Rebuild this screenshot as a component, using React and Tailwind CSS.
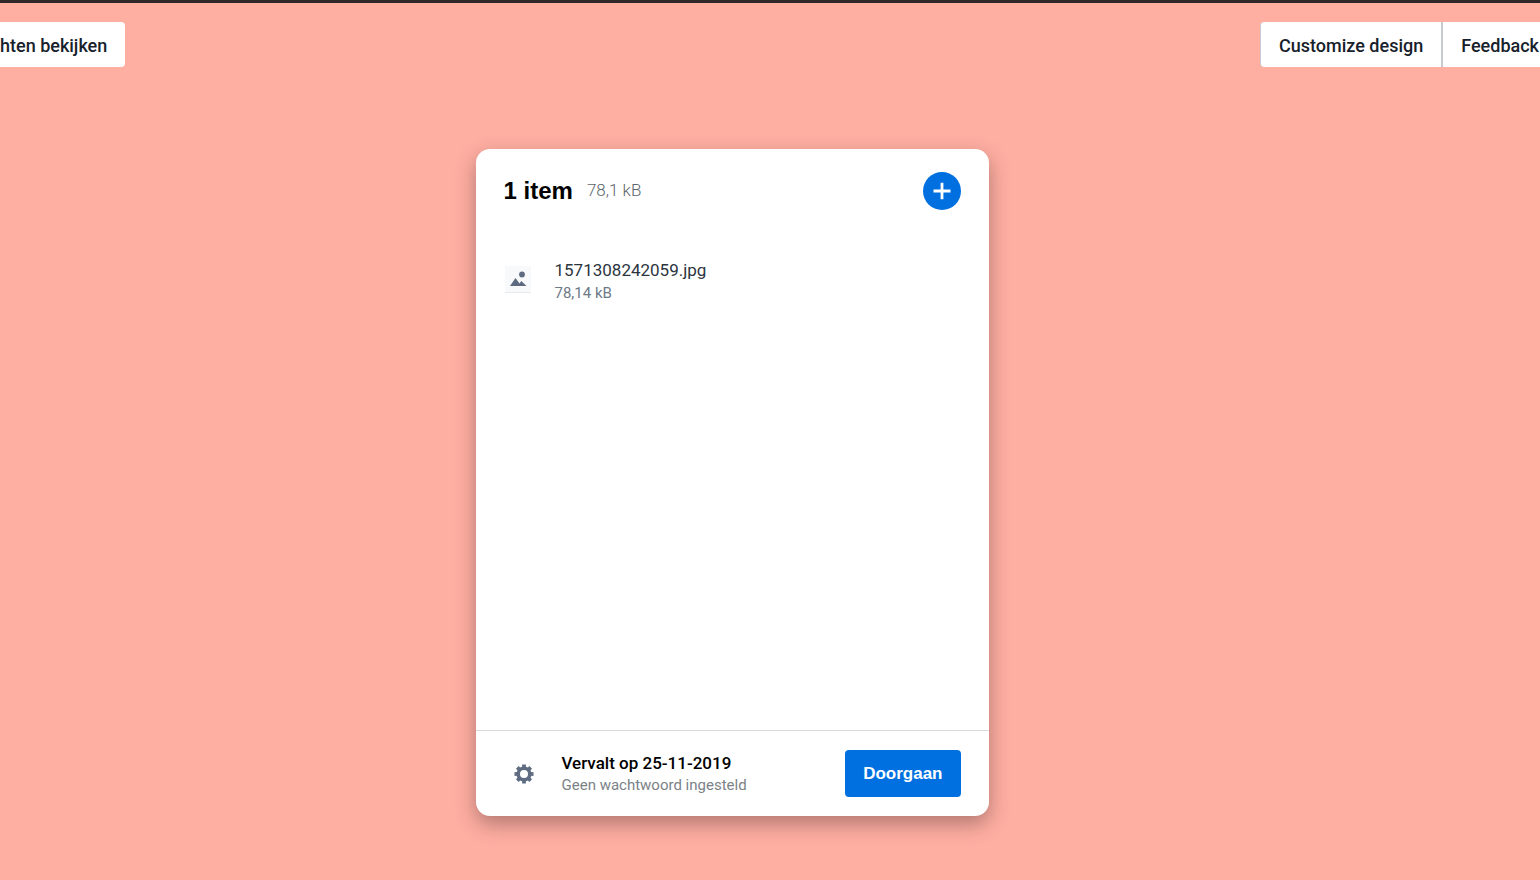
import React, { useState } from 'react';

const files = [{ id: 1, name: '1571308242059.jpg', size: '78,14 kB' }];

const PlusIcon = () => (
  <svg width="18" height="18" viewBox="0 0 18 18" fill="none" stroke="white" strokeWidth="2.8" aria-hidden="true">
    <path d="M9 .8v16.4M.5 9h17" />
  </svg>
);

const ImageIcon = () => (
  <svg width="26" height="27" viewBox="0 0 26 27" aria-hidden="true">
    <rect width="26" height="26" fill="#f7f9fb" />
    <path d="M0 26.5h26" stroke="#e6e9ed" />
    <path d="M5 20l5.5-8 4 5.4 1.8-2.4 5.2 5z" fill="#5c6b80" />
    <circle cx="17" cy="8.5" r="2.9" fill="#5c6b80" />
  </svg>
);

const GearIcon = () => (
  <svg width="20" height="20" viewBox="0 0 20 20" fill="none" stroke="#5f6c82" aria-hidden="true">
    <circle cx="10" cy="10" r="5.8" strokeWidth="3.6" />
    <g strokeWidth="3.8">
      {[0, 45, 90, 135, 180, 225, 270, 315].map((angle) => (
        <path key={angle} d="M10 4V.5" transform={`rotate(${angle} 10 10)`} />
      ))}
    </g>
  </svg>
);

const TopBar = () => (
  <header className="flex items-start justify-between pt-[19px]">
    <button className="h-[45px] rounded-r-[4px] bg-white pt-0.5 pr-[18px] text-lg font-medium text-[#17212b]">
      hten bekijken
    </button>
    <nav className="flex h-[45px] rounded-l-[4px] border-l border-[#c5cbd0] bg-white text-lg font-medium text-[#17212b]">
      <button className="px-[18px] pt-0.5">Customize design</button>
      <button className="border-l-2 border-[#c5cbd0] pt-0.5 pr-px pl-[18px]">Feedback</button>
    </nav>
  </header>
);

const FileRow = ({ file }) => (
  <li className="flex items-start gap-6 pl-[29px]">
    <div className="pt-2">
      <ImageIcon />
    </div>
    <div>
      <div className="text-[17px] leading-6 text-[#2c353e]">{file.name}</div>
      <div className="text-[15px] leading-[22px] text-[#6d7a88]">{file.size}</div>
    </div>
  </li>
);

export default function App() {
  const [items] = useState(files);

  return (
    <div className="min-h-screen overflow-hidden border-t-[3px] border-[#30282a] bg-[#ffaea2] font-['Roboto',sans-serif]">
      <TopBar />
      <main className="flex justify-center pt-[82px] pr-[76px] pb-16">
        <section className="flex min-h-[667px] w-full max-w-[513px] flex-col rounded-[14px] bg-white shadow-[0_8px_20px_rgba(60,40,40,0.4)]">
          <div className="flex items-center pt-[23px] pr-7 pl-7">
            <h1 className="font-['Liberation_Sans',sans-serif] text-2xl font-bold text-black">
              {items.length} item
            </h1>
            <span className="ml-[14px] text-[17px] font-light text-[#5c666a]">78,1 kB</span>
            <button
              aria-label="Bestand toevoegen"
              className="ml-auto flex size-[38px] items-center justify-center rounded-full bg-[#0070e0]"
            >
              <PlusIcon />
            </button>
          </div>

          <ul className="flex-1 pt-12">
            {items.map((file) => (
              <FileRow key={file.id} file={file} />
            ))}
          </ul>

          <footer className="flex h-[86px] items-center border-t border-[#d9dcde] pr-7 pl-[38px]">
            <button aria-label="Instellingen">
              <GearIcon />
            </button>
            <div className="ml-7 pt-px">
              <div className="text-[17px] leading-[22px] font-medium text-black">Vervalt op 25-11-2019</div>
              <div className="text-[15px] leading-[22px] text-[#7b8287]">Geen wachtwoord ingesteld</div>
            </div>
            <button className="ml-auto h-[47px] rounded-[4px] bg-[#0070e0] px-[18px] pt-px font-['Liberation_Sans',sans-serif] text-[17px] font-bold text-white">
              Doorgaan
            </button>
          </footer>
        </section>
      </main>
    </div>
  );
}
